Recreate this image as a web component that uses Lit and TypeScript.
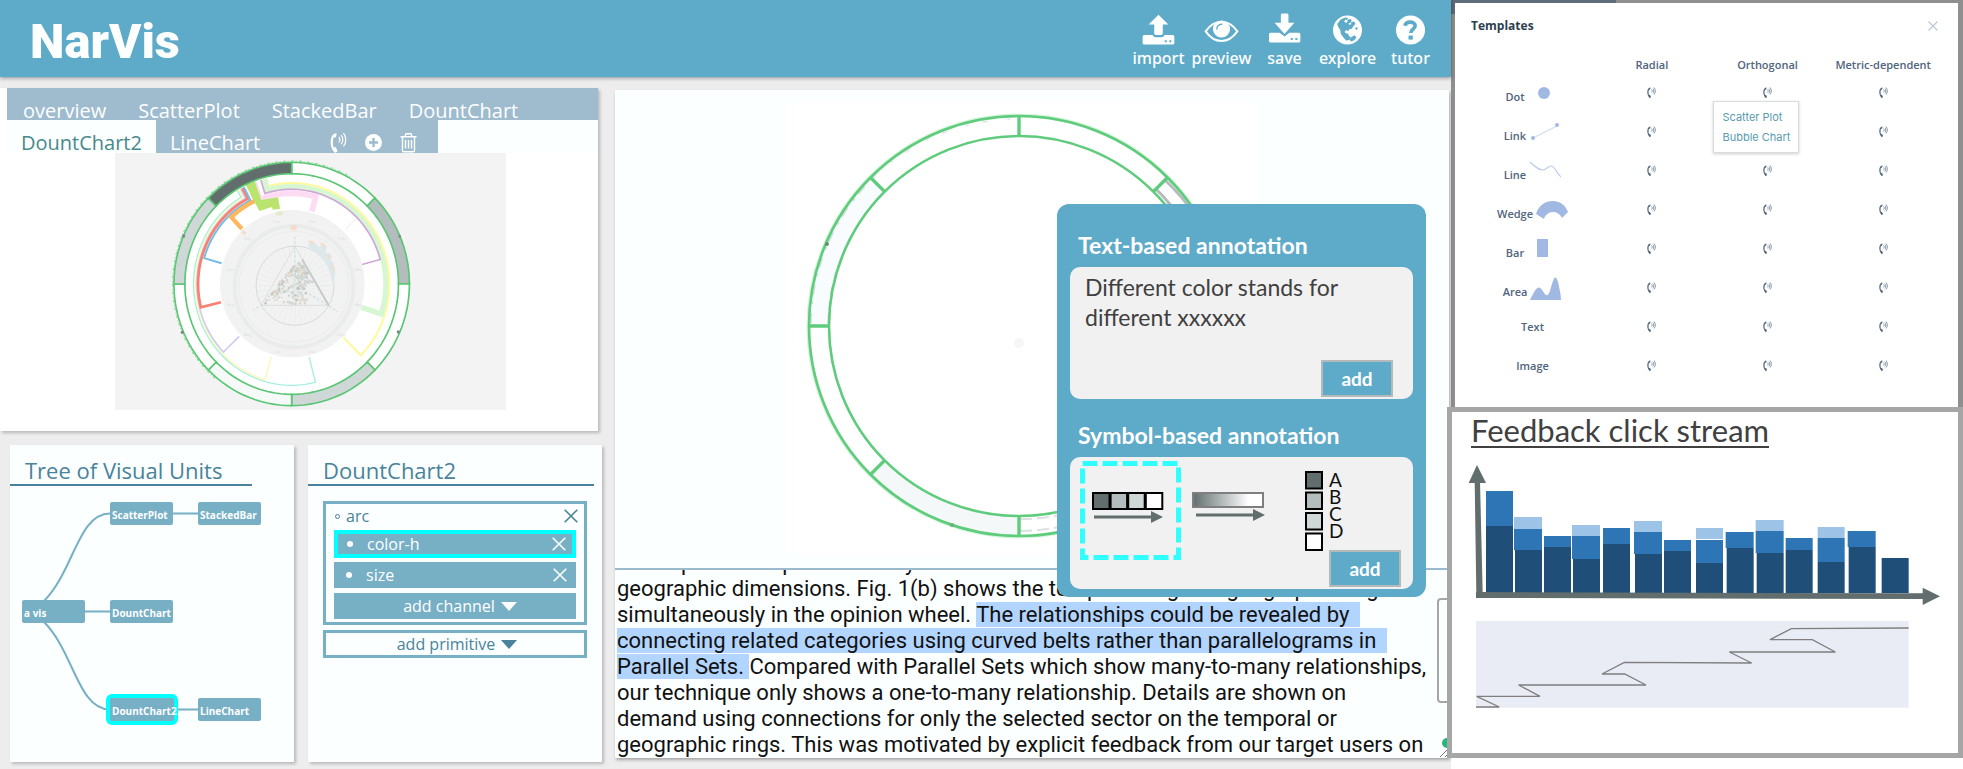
import { LitElement, html, svg, css } from "lit";
import { customElement, state } from "lit/decorators.js";
import { classMap } from "lit/directives/class-map.js";

const phone = (cls: string) => html`<svg class=${cls} viewBox="0 0 18 22" aria-hidden="true">
  <path d="M5.6 1.2C2.2 2.6.6 6.2.6 10.5c0 4.3 1.6 8.2 4 10.9.6.5 1.2.5 1.8.1l1.7-1.2-2-4.6-2 .6C3.2 14.7 3 12.6 3.1 10.5c0-2 .3-3.7.9-5.1l2 .3 1.2-4z" fill="currentColor"/>
  <path d="M9.3 5.2c1.3 1.5 1.3 4.1 0 5.6M11.8 3.2c2.3 2.6 2.3 7 0 9.6M14.2 1c3.3 3.8 3.3 10.2 0 14" fill="none" stroke="currentColor" stroke-width="1.3"/>
</svg>`;

const cross = (cls: string) => html`<svg class=${cls} viewBox="0 0 14 14" aria-hidden="true">
  <path d="M.7.7l12.6 12.6M13.3.7L.7 13.3" stroke="currentColor" fill="none" stroke-width="1.6"/>
</svg>`;

const TOOLS = [
  { name: "import", box: "119 36 112 108", art: svg`
    <path d="M175 44l30 29h-17v27q0 5-5 5h-16q-5 0-5-5V73h-17z"/>
    <path fill-rule="evenodd" d="M132 105h25q3 7 10 7h17q7 0 9-7h25q5 0 5 5v19q0 5-5 5h-86q-5 0-5-5v-19q0-5 5-5zM194 121v6h6v-6zM208 121v6h6v-6z"/>` },
  { name: "preview", box: "311 36 112 108", art: svg`
    <path d="M319 94c14-20 30-29 48-29s34 9 48 29c-14 20-30 29-48 29s-34-9-48-29z" fill="none" stroke="currentColor" stroke-width="6"/>
    <circle cx="367" cy="87" r="26"/>
    <path d="M353 87c0-8 5-14 15-15" fill="none" stroke="#5eaac9" stroke-width="4" stroke-linecap="round"/>` },
  { name: "save", box: "504 36 112 108", art: svg`
    <path d="M553 40h15q4 0 4 4v24h18l-30 34-30-34h19V44q0-4 4-4z"/>
    <path fill-rule="evenodd" d="M518 98h27l15 12 15-12h28q5 0 5 5v20q0 5-5 5h-85q-5 0-5-5v-20q0-5 5-5zM579 114v6h6v-6zM593 114v6h6v-6z"/>` },
  { name: "explore", box: "689 36 112 108", art: svg`
    <circle cx="745" cy="90" r="44"/>
    <path fill="#5eaac9" d="M714 72l10-14 14-6 9 2-4 6 9-3 6 3-3 7 10-3 4 8-6 6-5 8-8 2-2 6-6-4-6 5 4 5 7 1 2 7 6 3-5 9-9 2-9-10-7-10-2-12-6-9zM756 112l10-6 6 6-6 9-11 4-4-6zM768 84l6-3 2 5-5 4z"/>
    <path fill="#fff" d="M738 58l8 3-3 7-8-2zM748 70l7-3 2 5-6 3z"/>` },
  { name: "tutor", box: "871 36 112 108", art: svg`
    <circle cx="927" cy="90" r="44"/>
    <path d="M910 77c2-8 9-11 16-11 9 0 15 5 15 11 0 11-13 10-13 22" fill="none" stroke="#5eaac9" stroke-width="11"/>
    <rect x="921" y="107" width="13" height="12" fill="#5eaac9"/>` },
];

/* Point on the slightly flattened rings of the donut, angle in degrees with 0 at three o'clock. */
const at = (deg: number, r: number) => {
  const a = (deg * Math.PI) / 180;
  return `${(575 + 0.968 * r * Math.cos(a)).toFixed(1)},${(432 + r * Math.sin(a)).toFixed(1)}`;
};
const sweep = (from: number, to: number, r: number) => {
  const n = Math.max(2, Math.ceil(Math.abs(to - from) / 3));
  return Array.from({ length: n + 1 }, (_, i) => at(from + ((to - from) * i) / n, r));
};
const SEGMENTS = ["#ffffff", "#b4bdbe", "#ffffff", "#cfd8d7", "#f5f9f8", "#ffffff", "#cfd8d7", "#616e6d"];
const BELTS = [
  { r: 304, from: -121, to: -284, w: 4, c: "#a5efe0" },
  { r: 299, from: -120, to: -254, w: 5, c: "#fdf8c0" },
  { r: 294, from: -119, to: -224, w: 5, c: "#cccdf3" },
  { r: 290, from: -118, to: -194, w: 8, c: "#fb8072" },
  { r: 282, from: -117, to: -164, w: 6, c: "#74bbe8" },
  { r: 274, from: -114, to: -133, w: 13, c: "#fdb75c" },
  { r: 303, from: -104, to: 45, w: 6, c: "#fff99a" },
  { r: 292, from: -105, to: 18, w: 16, c: "#d6f7d2" },
  { r: 284, from: -107, to: -15, w: 5, c: "#cfa6d8" },
  { r: 272, from: -111, to: -74, w: 17, c: "#fddcf3" },
];
const MONTHS: [string, number, number][] = [
  ["Jan", 625, 249], ["Feb", 712, 301], ["Mar", 764, 392], ["Apr", 764, 497], ["May", 712, 588], ["Jun", 624, 640],
  ["Jul", 522, 640], ["Aug", 432, 588], ["Sep", 380, 497], ["Oct", 380, 392], ["Nov", 431, 301], ["Dec", 520, 249],
];
const noise = (n: number) => {
  const v = Math.sin(n * 127.1 + 11.7) * 43758.5453;
  return v - Math.floor(v);
};
const SPECKS = Array.from({ length: 190 }, (_, i) => {
  const y = 368 + 124 * noise(i);
  const left = 594 - (y - 362) * 0.84, right = 606 + (y - 362) * (y < 440 ? 0.5 : 0.2);
  return { x: left + (right - left) * noise(i + 500), y, r: 2.5 + 2 * noise(i + 900), c: ["#ccd8d5", "#d8d8d4", "#c2cac8", "#e5d5c4"][i % 4] };
});

const SERIES: [number, number, number[], number[] | null, number[] | null][] = [
  [138, 81, [375, 582], [276, 381], null], [222, 84, [453, 582], [390, 453], [354, 390]],
  [312, 81, [444, 582], [411, 444], null], [396, 84, [480, 582], [411, 480], [378, 411]],
  [489, 81, [435, 582], [387, 435], null], [582, 84, [465, 582], [399, 465], [366, 399]],
  [672, 81, [456, 582], [423, 456], null], [768, 81, [477, 582], [423, 492], [387, 420]],
  [857, 84, [447, 582], [399, 447], null], [947, 84, [462, 582], [396, 462], [363, 396]],
  [1037, 81, [453, 582], [417, 453], null], [1133, 81, [489, 582], [417, 489], [384, 417]],
  [1223, 84, [444, 582], [396, 444], null], [1325, 81, [477, 582], null, null],
];

const GLYPHS = {
  Dot: svg`<circle cx="16" cy="12" r="6"/>`,
  Link: svg`<path d="M4 18L28 6" stroke="#c6d5ef" stroke-width="1" fill="none"/><circle cx="4" cy="18" r="2"/><circle cx="28" cy="5" r="2"/>`,
  Line: svg`<path d="M1 3c5 5 9 8 13 8 3 0 5-4 8-4 4 0 6 8 10 11" fill="none" stroke="#b8caea" stroke-width="1.2"/>`,
  Wedge: svg`<path d="M0 16C5-1 27-1 32 14l-6 6c-4-8-15-8-18 1z"/>`,
  Bar: svg`<rect x="10" y="2" width="11" height="18"/>`,
  Area: svg`<path d="M0 24C5 14 8 8 12 14c3 4 5 9 8 1C23 4 25-4 28 6c1 5 3 12 3 18z"/>`,
};

@customElement("app-toolbar")
export class AppToolbar extends LitElement {
  static styles = css`
    :host { display: flex; justify-content: space-between; align-items: flex-start; height: 77px; box-sizing: border-box; padding: 0 10px 0 30px; background: #5eaac9; color: #fdffff; box-shadow: 0 1px 4px rgba(0, 0, 0, 0.4); position: relative; z-index: 1; }
    h1 { margin: 0; font: 900 49px/54px Roboto, "Liberation Sans", sans-serif; padding-top: 15px; }
    nav { display: flex; padding-top: 12px; gap: 2px; }
    button { display: flex; flex-direction: column; align-items: center; width: 61px; padding: 0; border: 0; background: none; color: inherit; font: 500 16px/21px "Noto Sans", sans-serif; cursor: pointer; }
    svg { width: 37px; height: 36px; fill: currentColor; }
  `;
  render() {
    return html`<h1>NarVis</h1>
      <nav aria-label="Main">
        ${TOOLS.map((t) => html`<button type="button"><svg viewBox=${t.box} aria-hidden="true">${t.art}</svg><span>${t.name}</span></button>`)}
      </nav>`;
  }
}

@customElement("unit-preview")
export class UnitPreview extends LitElement {
  static styles = css`
    :host { display: block; margin-right: 5px; box-shadow: 2px 2px 3px rgba(0, 0, 0, 0.22); background: #fff; }
    .tabs { margin-left: 7px; background: #fcffff; }
    .row { display: flex; background: #9fbbce; height: 32px; color: #fdffff; }
    .row.second { width: 431px; height: 33px; }
    button { border: 0; background: none; color: inherit; cursor: pointer; padding: 0 16px; font: 500 20px/18px "Open Sans", sans-serif; display: flex; align-items: flex-end; }
    .row.second button { padding: 0 14px 1px; }
    button.active { background: #fcffff; color: #48898a; }
    .tools { display: flex; align-items: flex-end; gap: 2px; margin-left: auto; padding-right: 13px; }
    .row.second .tools button { padding: 0 8px; }
    .icon { width: 17px; height: 21px; }
    figure { margin: 0; padding: 0 0 21px 22px; display: flex; justify-content: center; }
    .donut { width: 391px; height: 257px; background: #f3f3f3; display: block; }
    .months { font: 13px "Liberation Sans", sans-serif; fill: #dedede; }
  `;
  @state() active = "DountChart2";
  tab(name: string) {
    return html`<button type="button" class=${classMap({ active: this.active === name })} @click=${() => (this.active = name)}>${name}</button>`;
  }
  render() {
    return html`
      <div class="tabs">
        <div class="row">${["overview", "ScatterPlot", "StackedBar", "DountChart"].map((n) => this.tab(n))}</div>
        <div class="row second">
          ${["DountChart2", "LineChart"].map((n) => this.tab(n))}
          <div class="tools">
            <button type="button" aria-label="Templates">${phone("icon")}</button>
            <button type="button" aria-label="Add unit"><svg class="icon" viewBox="0 0 17 21"><circle cx="8.5" cy="10.5" r="8.5" fill="currentColor"/><path d="M8.5 6v9M4 10.5h9" stroke="#9fbbce" stroke-width="2.4"/></svg></button>
            <button type="button" aria-label="Delete unit"><svg class="icon" viewBox="0 0 17 21"><path d="M.5 4.7h16M5 4.5l1-2.7h5l1 2.7M2.5 5v13.5q0 1.2 1.2 1.2h9.6q1.2 0 1.2-1.2V5M5.5 8v8.5M8.5 8v8.5M11.5 8v8.5" fill="none" stroke="currentColor" stroke-width="1.4"/></svg></button>
          </div>
        </div>
      </div>
      <figure>
        <svg class="donut" viewBox="45 39 1173 771" role="img" aria-label="Donut chart preview">
          <ellipse cx="575" cy="432" rx="320" ry="331" fill="#fff"/>
          ${BELTS.map((b) => svg`<polyline fill="none" stroke=${b.c} stroke-width=${b.w} points=${[at(b.from, 326), ...sweep(b.from, b.to, b.r), at(b.to, 226)].join(" ")}/>`)}
          <path d="M436 132l28-8 20 56 50-8 6 34-22 3-2-8-38 12z" fill="#b9e46d"/>
          <path d="M735 270l34-34" stroke="#dfe9e6" stroke-width="2"/>
          <ellipse cx="577" cy="431" rx="217" ry="221" fill="#f2f2f2"/>
          <g fill="none" stroke="#e3e8e7">
            <ellipse cx="582" cy="440" rx="178" ry="182" stroke-width="12" stroke="#e9eceb"/>
            <circle cx="582" cy="440" r="166" stroke-width="2"/>
            <ellipse cx="585" cy="437" rx="117" ry="119" stroke="#d6dad9" stroke-width="3"/>
            ${Array.from({ length: 40 }, (_, i) => {
              const a = (i * Math.PI) / 20;
              return svg`<path stroke-width="1.5" d="M585 437l${(115 * Math.cos(a)).toFixed(1)} ${(117 * Math.sin(a)).toFixed(1)}"/>`;
            })}
            <path d="M585 318L483 496H685z" stroke="#d3d7d6" stroke-width="2"/>
            <path d="M606 358l80 138" stroke="#c6cbca" stroke-width="6"/>
            <path d="M584 290v145l130 80M584 435l-124 75" stroke="#cfe0db" stroke-width="4" stroke-dasharray="8 6"/>
          </g>
          <path d="M624 322l6-18 14 6 14 12 10-12 12 10-4 18 14 2 6 10-6 10 12 10-4 14 8 10-4 36-6-2c-4-44-26-80-68-106z" fill="#dde8ea"/>
          <path d="M626 300l18 6-2 6-18-5zM664 306l16 12-4 5-15-12zM684 342l10 12-5 4-9-11zM698 372l8 16-6 2-7-15zM572 255h18v15h-18zM428 270l12 8-6 8-11-8z" fill="#f3dccb"/>
          <path d="M527 216l20-2 3 10-22 3z" fill="#e2ead0"/>
          ${SPECKS.map((s) => svg`<circle cx=${s.x} cy=${s.y} r=${s.r} fill=${s.c}/>`)}
          <g class="months">${MONTHS.map(([m, x, y]) => svg`<text x=${x} y=${y}>${m}</text>`)}</g>
          ${SEGMENTS.map((c, i) => {
            const a = -90 + i * 45;
            return svg`<polygon points=${[...sweep(a, a + 45, 365), ...sweep(a + 45, a, 331)].join(" ")} fill=${c} stroke="#5ac573" stroke-width="5"/>`;
          })}
          <polyline points=${sweep(130, 300, 369).join(" ")} fill="none" stroke="#8fdba0" stroke-width="4" stroke-dasharray="9 5 3 7"/>
          <g fill="#7c8a88"><circle cx="251" cy="288" r="5"/><circle cx="247" cy="577" r="5"/><circle cx="899" cy="289" r="4"/><circle cx="895" cy="576" r="5"/></g>
        </svg>
      </figure>`;
  }
}

@customElement("unit-tree")
export class UnitTree extends LitElement {
  static styles = css`
    :host { display: block; background: #fcffff; box-shadow: 2px 2px 3px rgba(0, 0, 0, 0.22); }
    h2 { margin: 0 42px 0 0; padding: 11px 0 0 15px; font: 400 22px/28px "Open Sans", sans-serif; color: #48839b; border-bottom: 2px solid #48839b; white-space: nowrap; }
    svg { display: block; width: 284px; height: 276px; }
    .label { font: 700 10px "Open Sans", sans-serif; fill: #fff; }
  `;
  nodes: [string, number, number, boolean][] = [
    ["ScatterPlot", 100, 16, false], ["StackedBar", 188, 16, false], ["a vis", 12, 114, false],
    ["DountChart", 100, 114, false], ["DountChart2", 100, 212, true], ["LineChart", 188, 212, false],
  ];
  render() {
    return html`<h2>Tree of Visual Units</h2>
      <svg viewBox="0 0 284 276" role="img" aria-label="Tree of visual units">
        <path fill="none" stroke="#77afc5" stroke-width="2" d="M163 27.5h25M75 125.5h25M163 223.5h25M34 115C64 85 68 27.5 100 27.5M34 136C64 166 68 223.5 100 223.5"/>
        ${this.nodes.map(([name, x, y, on]) => svg`
          <rect x=${on ? x - 2 : x} y=${on ? y - 2 : y} width=${on ? 68 : 63} height=${on ? 27 : 23} rx=${on ? 4 : 2} fill="#77afc5" stroke=${on ? "#00ffff" : "none"} stroke-width="4"/>
          <text class="label" x=${x + 2} y=${y + 17}>${name}</text>`)}
      </svg>`;
  }
}

@customElement("unit-editor")
export class UnitEditor extends LitElement {
  static styles = css`
    :host { display: block; background: #fcffff; box-shadow: 2px 2px 3px rgba(0, 0, 0, 0.22); color: #48839b; font: 500 16px/20px "Open Sans", sans-serif; }
    h2 { margin: 0 8px 0 0; padding: 11px 0 0 15px; font: 400 22px/28px "Open Sans", sans-serif; border-bottom: 2px solid #48839b; }
    button { font: inherit; color: inherit; border: 0; background: none; padding: 0; cursor: pointer; display: flex; align-items: center; justify-content: center; }
    .primitive { margin: 15px 15px 5px; border: 3px solid #77afc5; padding: 0 0 3px; }
    .head { display: flex; align-items: center; padding: 0 6px 2px 9px; height: 24px; }
    .head span { flex: 1; }
    .ring { width: 5px; height: 5px; box-sizing: border-box; border: 1px solid #48839b; border-radius: 50%; margin-right: 6px; }
    ul { list-style: none; margin: 0 8px; padding: 0; display: grid; gap: 4px; }
    li { display: flex; align-items: center; height: 26px; padding: 0 9px 0 12px; background: #77afc5; color: #fff; }
    li.selected { border: 4px solid #00ffff; height: 20px; padding: 0 6px 0 9px; }
    .dot { width: 6px; height: 6px; border-radius: 50%; background: #fff; margin-right: 14px; }
    li span { flex: 1; }
    .x { width: 14px; height: 14px; display: block; }
    .channel { width: calc(100% - 16px); height: 26px; margin: 5px 8px 0; padding-left: 10px; background: #77afc5; color: #fff; }
    .add { width: calc(100% - 30px); margin: 0 15px; height: 28px; padding-left: 4px; border: 3px solid #77afc5; }
    .caret { width: 16px; height: 9px; margin-left: 6px; fill: currentColor; }
  `;
  render() {
    const caret = html`<svg class="caret" viewBox="0 0 16 9" aria-hidden="true"><path d="M0 0h16L8 9z"/></svg>`;
    return html`<h2>DountChart2</h2>
      <section class="primitive">
        <div class="head"><i class="ring"></i><span>arc</span><button type="button" aria-label="Remove arc">${cross("x")}</button></div>
        <ul>
          ${["color-h", "size"].map((c, i) => html`<li class=${classMap({ selected: i === 0 })}><i class="dot"></i><span>${c}</span><button type="button" aria-label="Remove ${c}">${cross("x")}</button></li>`)}
        </ul>
        <button type="button" class="channel">add channel ${caret}</button>
      </section>
      <button type="button" class="add">add primitive ${caret}</button>`;
  }
}

@customElement("annotation-popup")
export class AnnotationPopup extends LitElement {
  static styles = css`
    :host { display: block; box-sizing: border-box; width: 369px; padding: 26px 13px 8px; border-radius: 12px; background: #5eaac9; font-family: Lato, sans-serif; }
    label, h3 { display: block; margin: 0; padding: 0 8px 6px; font: 700 23px/31px Lato, sans-serif; color: #fff; }
    .card { border-radius: 10px; background: #f1f1f1; display: flex; flex-direction: column; height: 132px; box-sizing: border-box; }
    h3 { padding-top: 21px; }
    textarea { flex: 1; min-height: 0; resize: none; border: 0; outline: 0; background: none; overflow: hidden; padding: 5px 15px 0; font: 400 23px/30px Lato, sans-serif; color: #404040; }
    .add { align-self: flex-end; width: 72px; height: 37px; flex: none; margin: 0 20px 2px; border: 2px solid #b4b9bb; background: #5eaac9; color: #fff; font: 700 19px/30px Lato, sans-serif; cursor: pointer; padding: 0; }
    .symbols { flex: 1; display: flex; min-height: 0; padding: 4px 0 0 9px; }
    .symbols svg { width: 300px; height: 100px; flex: none; }
    .symbols + .add { margin: 0 12px 2px; }
    .names { font: 19px Lato, sans-serif; fill: #111; }
  `;
  render() {
    const arrow = (x: number, y: number, len: number) => svg`<path d="M${x} ${y}h${len - 12}" stroke="#616e6d" stroke-width="3"/><path d="M${x + len} ${y}l-12-6v12z" fill="#616e6d"/>`;
    const tones = ["#616e6d", "#b4bdbe", "#cfd8d7", "#ffffff"];
    return html`
      <label for="note">Text-based annotation</label>
      <div class="card">
        <textarea id="note" .value=${"Different color stands for\ndifferent xxxxxx"}></textarea>
        <button type="button" class="add">add</button>
      </div>
      <h3>Symbol-based annotation</h3>
      <div class="card">
        <div class="symbols">
          <svg viewBox="0 0 300 100" role="img" aria-label="Symbol choices">
            <defs><linearGradient id="fade"><stop offset="0" stop-color="#616e6d"/><stop offset=".8" stop-color="#fff"/></linearGradient></defs>
            <rect x="3.5" y="2.5" width="96" height="94" fill="none" stroke="#2fffff" stroke-width="5" stroke-dasharray="15 5"/>
            ${tones.map((c, i) => svg`<rect x=${14 + i * 17.6} y="32" width="16.5" height="16" fill=${c} stroke="#000" stroke-width="2"/>`)}
            ${arrow(15, 56, 69)}
            <rect x="114" y="32" width="70" height="14" fill="url(#fade)" stroke="#7f7f7f" stroke-width="2"/>
            ${arrow(117, 54, 69)}
            ${tones.map((c, i) => svg`<rect x="227" y=${11 + i * 20.5} width="16" height="16.5" fill=${c} stroke="#000" stroke-width="2"/>`)}
            <g class="names">${["A", "B", "C", "D"].map((n, i) => svg`<text x="250" y=${26 + i * 17}>${n}</text>`)}</g>
          </svg>
        </div>
        <button type="button" class="add">add</button>
      </div>`;
  }
}

@customElement("story-canvas")
export class StoryCanvas extends LitElement {
  static styles = css`
    :host { display: block; position: relative; background: #fcffff; box-shadow: 1px 2px 3px rgba(0, 0, 0, 0.3); }
    figure { margin: 0; padding: 11px 18px 13px 0; display: flex; justify-content: center; border-bottom: 2px solid #9bbace; }
    .ring { display: block; width: 470px; height: 454px; background: #fff; }
    annotation-popup { position: absolute; top: 114px; right: 23px; }
    .reader { height: 188px; overflow: hidden; display: flex; align-items: flex-end; }
    p { margin: 0; padding-left: 2px; white-space: pre; font: 400 22px/26px Roboto, "Liberation Sans", sans-serif; color: #111; }
    mark { background: #b1d5ff; color: inherit; }
    .edge { position: absolute; right: 0; bottom: 0; width: 12px; height: 162px; }
  `;
  render() {
    const spoke = (d: number) => {
      const a = (d * Math.PI) / 180, c = Math.cos(a), s = Math.sin(a);
      return `M${231 + 190 * c} ${225 + 190 * s}L${231 + 210 * c} ${225 + 210 * s}`;
    };
    return html`
      <figure>
        <svg class="ring" viewBox="0 0 470 454" role="img" aria-label="Donut outline">
          <g fill="none">
            <path d="M84 78A208 208 0 0 1 231 18" stroke="#e3e6e8" stroke-width="1.5" stroke-dasharray="6 19 3 14"/>
            <path d="M31 225A200 200 0 0 1 90 84" stroke="#f8fcff" stroke-width="18"/>
            <path d="M23 222A208 208 0 0 1 84 78M40 222A191 191 0 0 1 96 91" stroke="#d3d9dc" stroke-width="1.5" stroke-dasharray="10 9 3 6"/>
            <path d="M90 366A200 200 0 0 0 231 425" stroke="#f4f8f8" stroke-width="18"/>
            <path d="M232 418A193 193 0 0 0 300 406M232 430A205 205 0 0 0 300 418" stroke="#dde0e2" stroke-width="2" stroke-dasharray="12 5"/>
            <path d="M368 88A194 194 0 0 1 420 180M377 79A206 206 0 0 1 430 160" stroke="#b5babd" stroke-width="3"/>
            <circle cx="231" cy="225" r="210.5" stroke="#d6f5dc" stroke-width="4"/>
            <g stroke="#5fcb7c" stroke-width="2.6">
              <circle cx="231" cy="225" r="210"/><circle cx="231" cy="225" r="190"/>
              <path stroke-width="3.4" d=${[0, 45, 90, 135, 180, 225, 270, 315].map(spoke).join("")}/>
            </g>
          </g>
          <circle cx="39" cy="143" r="2" fill="#6d8a78"/><circle cx="164" cy="424" r="2" fill="#6fae80"/>
          <circle cx="231" cy="242" r="5" fill="#f6f6f6"/>
        </svg>
      </figure>
      <div class="reader">
        <p>develop an example with every
geographic dimensions. Fig. 1(b) shows the temporal ring and geographic ring
simultaneously in the opinion wheel. <mark>The relationships could be revealed by  
connecting related categories using curved belts rather than parallelograms in  
Parallel Sets. </mark>Compared with Parallel Sets which show many-to-many relationships,
our technique only shows a one-to-many relationship. Details are shown on
demand using connections for only the selected sector on the temporal or
geographic rings. This was motivated by explicit feedback from our target users on</p>
      </div>
      <svg class="edge" viewBox="0 0 12 162" aria-hidden="true">
        <path d="M12 3H4q-3 0-3 3v97q0 3 3 3h8" fill="none" stroke="#a6a6a6" stroke-width="2"/>
        <circle cx="10" cy="147" r="5" fill="#28b779"/><path d="M3 161l9-9M8 161l4-4" stroke="#777" stroke-width="1"/>
      </svg>
      <annotation-popup></annotation-popup>`;
  }
}

@customElement("template-table")
export class TemplateTable extends LitElement {
  static styles = css`
    :host { display: block; box-sizing: border-box; padding: 3px 5px 0 4px; background: linear-gradient(90deg, #5d6c78 165px, #8f8f8f 165px) 0 0 / 100% 14px no-repeat #8f8f8f; font: 600 11px/16px "Open Sans", sans-serif; color: #4f647d; }
    .sheet { background: #fff; padding: 13px 17px 0 16px; height: 404px; box-sizing: border-box; }
    header { display: flex; justify-content: space-between; align-items: center; height: 20px; }
    h2 { margin: 0; font: 700 12px/20px "Open Sans", sans-serif; color: #2c3e50; }
    button { border: 0; padding: 0; background: none; color: inherit; cursor: pointer; display: block; }
    .close { margin-right: 3px; color: #b9c8d8; }
    .x { width: 10px; height: 10px; display: block; }
    table { width: 100%; border-collapse: collapse; table-layout: fixed; margin-top: 21px; }
    th, td { padding: 0; text-align: center; font-weight: 600; height: 39px; }
    thead th { height: 16px; }
    .corner { width: 123px; }
    .name { display: flex; align-items: flex-end; justify-content: center; gap: 3px; }
    .glyph { width: 32px; height: 24px; fill: #a1b9e2; }
    .spot { position: relative; display: flex; justify-content: center; }
    .icon { width: 9px; height: 11px; display: block; }
    .menu { position: absolute; z-index: 1; top: 14px; left: 50%; margin: 0 0 0 -54px; padding: 5px 8px; list-style: none; background: #fff; border: 1px solid #d9dde0; box-shadow: 0 1px 3px rgba(0, 0, 0, 0.2); font: 11px/20px Inter, sans-serif; text-align: left; white-space: nowrap; }
    .menu a { color: #5a9bb0; text-decoration: none; }
  `;
  render() {
    const rows = ["Dot", "Link", "Line", "Wedge", "Bar", "Area", "Text", "Image"];
    return html`<div class="sheet">
      <header><h2>Templates</h2><button type="button" class="close" aria-label="Close">${cross("x")}</button></header>
      <table>
        <thead><tr><th class="corner"></th><th scope="col">Radial</th><th scope="col">Orthogonal</th><th scope="col">Metric-dependent</th></tr></thead>
        <tbody>${rows.map((r) => html`<tr>
          <th scope="row"><div class="name">${r}${r in GLYPHS ? html`<svg class="glyph" viewBox="0 0 32 24" aria-hidden="true">${GLYPHS[r as keyof typeof GLYPHS]}</svg>` : ""}</div></th>
          ${[0, 1, 2].map((c) => html`<td><div class="spot">${r === "Link" && c === 1 ? "" : html`<button type="button" aria-label="${r} template">${phone("icon")}</button>`}
            ${r === "Dot" && c === 1 ? html`<ul class="menu"><li><a href="#scatter">Scatter Plot</a></li><li><a href="#bubble">Bubble Chart</a></li></ul>` : ""}</div></td>`)}
        </tr>`)}</tbody>
      </table>
    </div>`;
  }
}

@customElement("click-stream")
export class ClickStream extends LitElement {
  static styles = css`
    :host { display: block; box-sizing: border-box; margin-left: -4px; padding: 2px 12px 43px 14px; border: 5px solid #a6a6a6; background: #fff; position: relative; z-index: 1; }
    h2 { display: inline-block; margin: 0 0 15px 5px; font: 400 31px/32px Lato, sans-serif; color: #404040; border-bottom: 2px solid #404040; }
    svg { display: block; width: 478px; max-width: 100%; height: 247px; }
  `;
  render() {
    const bar = (x: number, w: number, span: number[] | null, c: string) => (span ? svg`<rect x=${x} y=${span[0]} width=${w} height=${span[1] - span[0]} fill=${c}/>` : "");
    return html`<h2>Feedback click stream</h2>
      <svg viewBox="78 192 1434 741" role="img" aria-label="Click stream by step">
        ${SERIES.map(([x, w, low, mid, top]) => [bar(w === 84 ? x + 3 : x, 81, low, "#1f4e79"), bar(x, w, mid, "#2e75b6"), bar(x, w, top, "#9dc3e6")])}
        <g fill="#616e6d">
          <path d="M104 245h16l8 337h-19z"/><path d="M111 198l27 54H86z"/>
          <path d="M108 579l1342 4v17l-1342-3z"/><path d="M1500 592l-52-26v52z"/>
        </g>
        <rect x="108" y="666" width="1298" height="260" fill="#e9ebf5"/>
        <path fill="none" stroke="#7f7f7f" stroke-width="4" d="M108 924h70L110 892h190L236 858h382L554 825h-68L553 790l382 2L868 759h318L1117 722H990l64-33 352-2"/>
      </svg>`;
  }
}

@customElement("app-root")
export class AppRoot extends LitElement {
  static styles = css`
    :host { display: grid; grid-template-columns: minmax(0, 1451fr) minmax(0, 512fr); min-height: 100vh; background: #fff; }
    .studio { background: #ededed; }
    .work { display: grid; grid-template-columns: minmax(0, 603fr) minmax(0, 848fr); padding-bottom: 7px; }
    .left { padding-top: 11px; }
    .panels { display: grid; grid-template-columns: minmax(0, 284fr) minmax(0, 294fr); gap: 14px; margin: 14px 1px 0 10px; }
    .right { padding: 13px 2px 4px 12px; }
  `;
  render() {
    return html`
      <main class="studio">
        <app-toolbar></app-toolbar>
        <div class="work">
          <div class="left">
            <unit-preview></unit-preview>
            <div class="panels"><unit-tree></unit-tree><unit-editor></unit-editor></div>
          </div>
          <div class="right"><story-canvas></story-canvas></div>
        </div>
      </main>
      <aside><template-table></template-table><click-stream></click-stream></aside>`;
  }
}
